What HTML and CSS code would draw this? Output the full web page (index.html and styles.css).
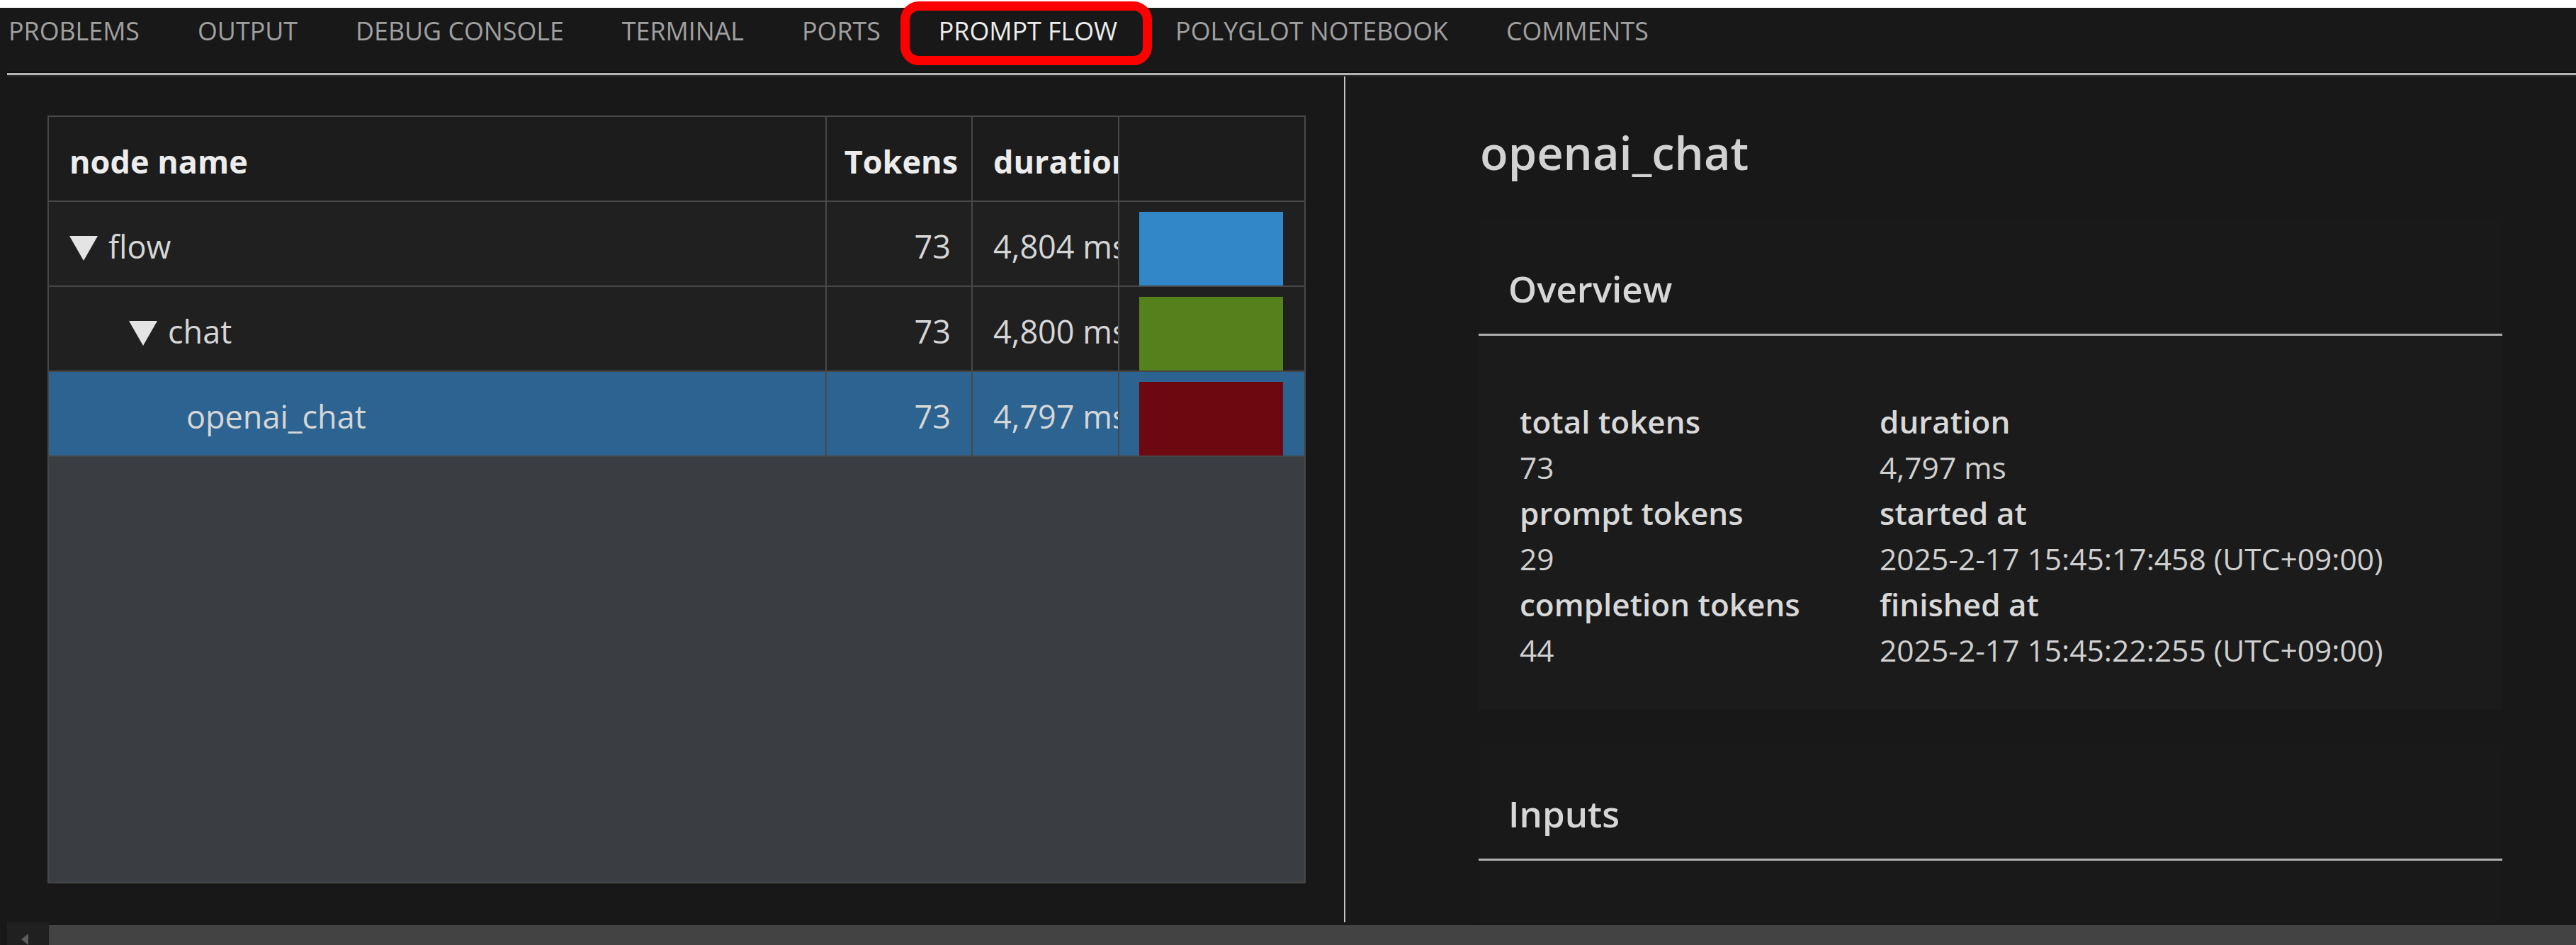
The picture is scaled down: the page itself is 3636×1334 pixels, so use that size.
FILE: index.html
```html
<!DOCTYPE html>
<html lang="en">
<head>
<meta charset="utf-8">
<title>Prompt Flow Trace</title>
<link rel="stylesheet" href="styles.css">
</head>
<body>
<div class="topstrip"></div>
<nav class="tabs">
  <span class="tab">PROBLEMS</span>
  <span class="tab">OUTPUT</span>
  <span class="tab">DEBUG CONSOLE</span>
  <span class="tab">TERMINAL</span>
  <span class="tab">PORTS</span>
  <span class="tab active">PROMPT FLOW<span class="highlight"></span></span>
  <span class="tab">POLYGLOT NOTEBOOK</span>
  <span class="tab">COMMENTS</span>
</nav>
<div class="rule"></div>
<main class="main">
  <section class="left">
    <div class="grid">
      <div class="row head">
        <div class="cell name">node name</div>
        <div class="cell num">Tokens</div>
        <div class="cell dur">duration</div>
        <div class="cell barcell"></div>
      </div>
      <div class="row">
        <div class="cell name lvl0"><svg class="caret" viewBox="0 0 40 35"><polygon points="0,0 40,0 20,35"/></svg>flow</div>
        <div class="cell num">73</div>
        <div class="cell dur">4,804 ms</div>
        <div class="cell barcell"><div class="bar blue"></div></div>
      </div>
      <div class="row">
        <div class="cell name lvl1"><svg class="caret" viewBox="0 0 40 35"><polygon points="0,0 40,0 20,35"/></svg>chat</div>
        <div class="cell num">73</div>
        <div class="cell dur">4,800 ms</div>
        <div class="cell barcell"><div class="bar green"></div></div>
      </div>
      <div class="row selected">
        <div class="cell name lvl2">openai_chat</div>
        <div class="cell num">73</div>
        <div class="cell dur">4,797 ms</div>
        <div class="cell barcell"><div class="bar red"></div></div>
      </div>
    </div>
  </section>
  <div class="divider"></div>
  <section class="right">
    <h1 class="title">openai_chat</h1>
    <div class="card">
      <h2 class="card-head">Overview</h2>
      <div class="card-body">
        <div class="col">
          <div class="lbl">total tokens</div>
          <div class="val">73</div>
          <div class="lbl">prompt tokens</div>
          <div class="val">29</div>
          <div class="lbl">completion tokens</div>
          <div class="val">44</div>
        </div>
        <div class="col">
          <div class="lbl">duration</div>
          <div class="val">4,797 ms</div>
          <div class="lbl">started at</div>
          <div class="val">2025-2-17 15:45:17:458 (UTC+09:00)</div>
          <div class="lbl">finished at</div>
          <div class="val">2025-2-17 15:45:22:255 (UTC+09:00)</div>
        </div>
      </div>
    </div>
    <div class="card inputs">
      <h2 class="card-head">Inputs</h2>
    </div>
  </section>
</main>
<div class="hscroll">
  <div class="scroll-btn"><svg viewBox="0 0 20 20" class="arrow"><polygon points="4,10 14,2 14,18"/></svg></div>
  <div class="scroll-thumb"></div>
</div>
</body>
</html>
```

FILE: styles.css
```css
* { box-sizing: border-box; }
html, body {
  margin: 0;
  padding: 0;
  width: 3636px;
  height: 1334px;
  overflow: hidden;
  background: #181818;
  font-family: "Open Sans", "Noto Sans", sans-serif;
  color: #d6d6d6;
}
.topstrip { height: 11px; background: #ffffff; }

.tabs {
  height: 90px;
  display: flex;
  align-items: flex-start;
  gap: 82px;
  padding-left: 12px;
  background: #181818;
}
.tab {
  position: relative;
  font-size: 35.8px;
  line-height: 64px;
  color: #a0a0a0;
  white-space: nowrap;
}
.tab.active { color: #ededed; }
.highlight {
  position: absolute;
  left: -54px;
  right: -49px;
  top: -9px;
  bottom: -17px;
  border: 13px solid #ff0000;
  border-radius: 26px;
}

.rule {
  height: 7px;
  margin-left: 10px;
  border-top: 2px solid #0e0e0e;
  border-bottom: 2px solid #2a2a2a;
  background: #b4b4b4;
}

.main {
  height: 1194px;
  display: flex;
}
.left {
  width: 1897px;
  flex: none;
  padding: 55px 0 0 67px;
}
.grid {
  width: 1776px;
  height: 1084px;
  background: #3a3d42;
  border: 2px solid #474747;
}
.row {
  display: grid;
  grid-template-columns: 1098px 206px 207px 1fr;
  height: 120px;
  background: #202020;
  border-bottom: 2px solid #474747;
}
.row.head { background: #1c1c1c; font-weight: 700; color: #ececec; }
.row.selected { background: #2c6391; }
.cell {
  overflow: hidden;
  white-space: nowrap;
  display: flex;
  align-items: center;
  padding-top: 6px;
  font-size: 45px;
  border-right: 2px solid #474747;
}
.cell:last-child { border-right: none; }
.cell.name { padding-left: 29px; }
.cell.lvl1 { padding-left: 113px; }
.cell.lvl2 { padding-left: 194px; }
.cell.num { justify-content: flex-end; padding-right: 29px; }
.head .cell.num { padding-right: 19px; }
.cell.dur { padding-left: 29px; }
.caret { width: 40px; height: 35px; fill: #e4e4e4; margin-right: 15px; margin-top: 6px; flex: none; }
.cell.barcell { align-items: flex-end; padding-left: 28px; padding-top: 0; }
.bar { width: 203px; height: 104px; }
.bar.blue { background: #3287c9; }
.bar.green { background: #54811c; }
.bar.red { background: #6d0810; }

.divider { width: 2px; flex: none; background: #c4c4c4; }

.right {
  flex: 1;
  padding-left: 188px;
  padding-right: 104px;
  overflow: hidden;
}
.title {
  margin: 67px 0 0 2px;
  font-size: 65px;
  line-height: 80px;
  font-weight: 600;
  color: #d2d2d2;
}
.card {
  margin-top: 56px;
  background: #191919;
}
.card-head {
  margin: 0;
  height: 163px;
  padding: 66px 0 0 42px;
  font-size: 51px;
  line-height: 60px;
  font-weight: 600;
  color: #d6d6d6;
  border-bottom: 3px solid #b0b0b0;
}
.card-body {
  display: grid;
  grid-template-columns: 508px 1fr;
  padding: 89px 58px 51px;
  background: #1b1b1b;
}
.lbl {
  font-size: 44px;
  line-height: 64px;
  font-weight: 600;
  color: #d8d8d8;
  white-space: nowrap;
}
.val {
  font-size: 42.5px;
  line-height: 65px;
  color: #d0d0d0;
  white-space: nowrap;
}
.card.inputs { margin-top: 51px; height: 400px; }

.hscroll {
  height: 32px;
  display: flex;
  background: #181818;
}
.scroll-btn {
  width: 59px;
  margin-left: 10px;
  background: #202020;
  flex: none;
  padding: 14px 0 0 16px;
}
.arrow { width: 20px; height: 20px; fill: #5c5c5c; display: block; }
.scroll-thumb {
  flex: 1;
  margin-top: 4px;
  background: #434343;
}
```
